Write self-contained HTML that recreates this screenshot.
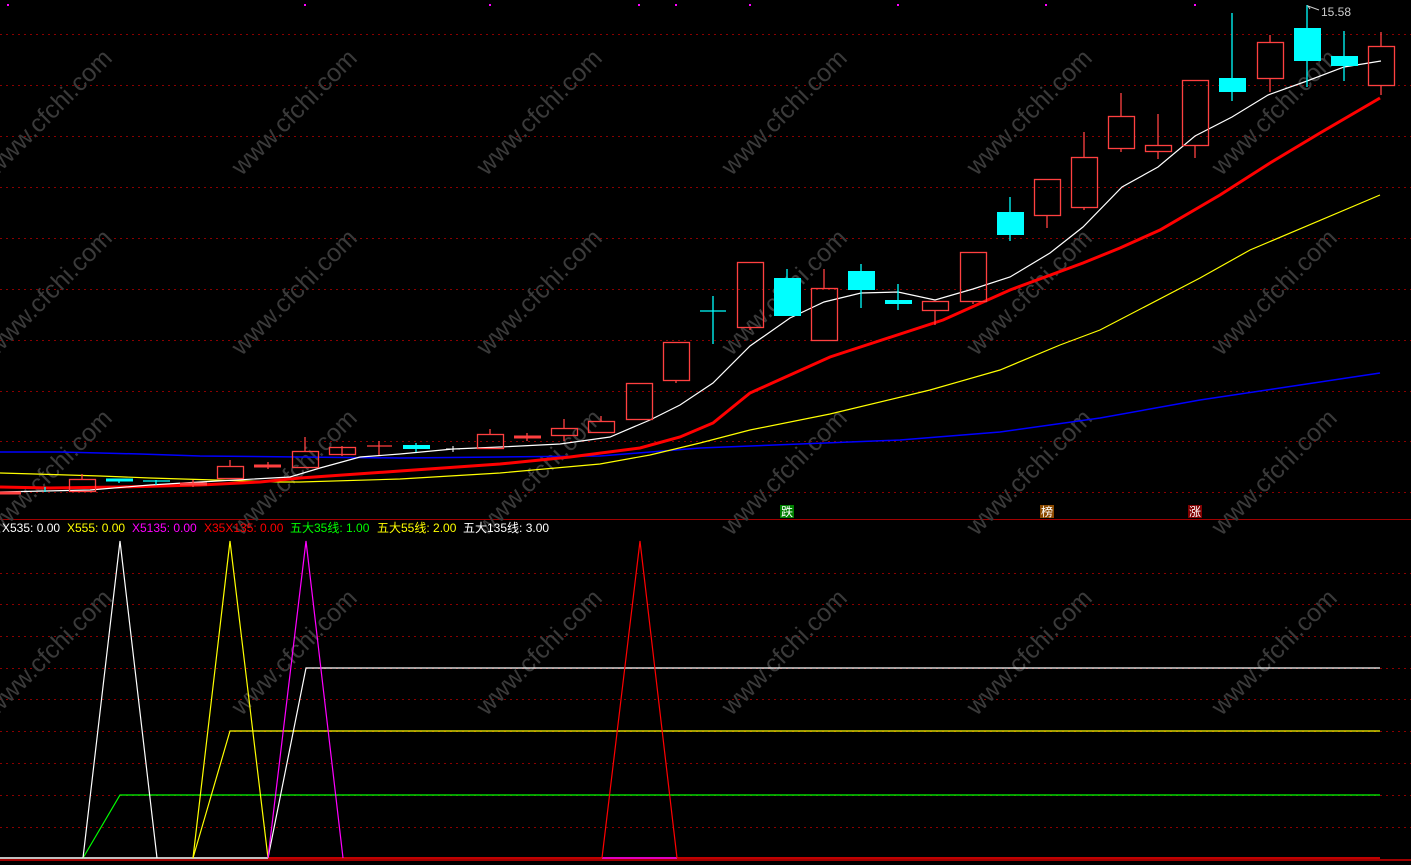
<!DOCTYPE html>
<html><head><meta charset="utf-8"><style>
html,body{margin:0;padding:0;background:#000;width:1411px;height:865px;overflow:hidden}
svg{display:block}
.wm{font-family:"Liberation Sans",sans-serif;font-size:25px;fill:#3a3a3a}
.lg{font-family:"Liberation Sans","Noto Sans CJK SC",sans-serif;font-size:12px}
</style></head><body>
<svg width="1411" height="865" xmlns="http://www.w3.org/2000/svg">
<g stroke="#8a0000" stroke-width="1" stroke-dasharray="2,4">
<line x1="0" y1="34.5" x2="1411" y2="34.5"/><line x1="0" y1="85.5" x2="1411" y2="85.5"/>
<line x1="0" y1="136.5" x2="1411" y2="136.5"/><line x1="0" y1="187.5" x2="1411" y2="187.5"/>
<line x1="0" y1="238.5" x2="1411" y2="238.5"/><line x1="0" y1="289.5" x2="1411" y2="289.5"/>
<line x1="0" y1="340.5" x2="1411" y2="340.5"/><line x1="0" y1="391.5" x2="1411" y2="391.5"/>
<line x1="0" y1="441.5" x2="1411" y2="441.5"/><line x1="0" y1="492.5" x2="1411" y2="492.5"/>
<line x1="0" y1="573.5" x2="1411" y2="573.5"/><line x1="0" y1="604.5" x2="1411" y2="604.5"/>
<line x1="0" y1="636.5" x2="1411" y2="636.5"/><line x1="0" y1="668.5" x2="1411" y2="668.5"/>
<line x1="0" y1="699.5" x2="1411" y2="699.5"/><line x1="0" y1="731.5" x2="1411" y2="731.5"/>
<line x1="0" y1="763.5" x2="1411" y2="763.5"/><line x1="0" y1="795.5" x2="1411" y2="795.5"/>
<line x1="0" y1="827.5" x2="1411" y2="827.5"/>
</g>
<line x1="0" y1="519.5" x2="1411" y2="519.5" stroke="#a00000"/>
<line x1="0" y1="860" x2="1411" y2="860" stroke="#a00000" stroke-width="2"/>
<g class="wm">
<g transform="translate(55,118) rotate(-45)"><text text-anchor="middle">www.cfchi.com</text></g>
<g transform="translate(300,118) rotate(-45)"><text text-anchor="middle">www.cfchi.com</text></g>
<g transform="translate(545,118) rotate(-45)"><text text-anchor="middle">www.cfchi.com</text></g>
<g transform="translate(790,118) rotate(-45)"><text text-anchor="middle">www.cfchi.com</text></g>
<g transform="translate(1035,118) rotate(-45)"><text text-anchor="middle">www.cfchi.com</text></g>
<g transform="translate(1280,118) rotate(-45)"><text text-anchor="middle">www.cfchi.com</text></g>
<g transform="translate(55,298) rotate(-45)"><text text-anchor="middle">www.cfchi.com</text></g>
<g transform="translate(300,298) rotate(-45)"><text text-anchor="middle">www.cfchi.com</text></g>
<g transform="translate(545,298) rotate(-45)"><text text-anchor="middle">www.cfchi.com</text></g>
<g transform="translate(790,298) rotate(-45)"><text text-anchor="middle">www.cfchi.com</text></g>
<g transform="translate(1035,298) rotate(-45)"><text text-anchor="middle">www.cfchi.com</text></g>
<g transform="translate(1280,298) rotate(-45)"><text text-anchor="middle">www.cfchi.com</text></g>
<g transform="translate(55,478) rotate(-45)"><text text-anchor="middle">www.cfchi.com</text></g>
<g transform="translate(300,478) rotate(-45)"><text text-anchor="middle">www.cfchi.com</text></g>
<g transform="translate(545,478) rotate(-45)"><text text-anchor="middle">www.cfchi.com</text></g>
<g transform="translate(790,478) rotate(-45)"><text text-anchor="middle">www.cfchi.com</text></g>
<g transform="translate(1035,478) rotate(-45)"><text text-anchor="middle">www.cfchi.com</text></g>
<g transform="translate(1280,478) rotate(-45)"><text text-anchor="middle">www.cfchi.com</text></g>
<g transform="translate(55,658) rotate(-45)"><text text-anchor="middle">www.cfchi.com</text></g>
<g transform="translate(300,658) rotate(-45)"><text text-anchor="middle">www.cfchi.com</text></g>
<g transform="translate(545,658) rotate(-45)"><text text-anchor="middle">www.cfchi.com</text></g>
<g transform="translate(790,658) rotate(-45)"><text text-anchor="middle">www.cfchi.com</text></g>
<g transform="translate(1035,658) rotate(-45)"><text text-anchor="middle">www.cfchi.com</text></g>
<g transform="translate(1280,658) rotate(-45)"><text text-anchor="middle">www.cfchi.com</text></g>
</g>
<g fill="#ff00ff">
<rect x="7" y="4" width="2" height="2"/><rect x="304" y="4" width="2" height="2"/><rect x="489" y="4" width="2" height="2"/><rect x="638" y="4" width="2" height="2"/><rect x="675" y="4" width="2" height="2"/><rect x="749" y="4" width="2" height="2"/><rect x="897" y="4" width="2" height="2"/><rect x="1045" y="4" width="2" height="2"/><rect x="1194" y="4" width="2" height="2"/>
</g>
<!-- MAs -->
<polyline fill="none" stroke="#0000ff" stroke-width="1.5" points="0,452 60,452 100,453 140,454 200,456 300,457 400,458 500,457 600,456 700,448 800,444 900,440 1000,432 1100,418 1200,400 1300,385 1380,373"/>
<polyline fill="none" stroke="#ffff00" stroke-width="1.2" points="0,473 35,474 100,476 150,478 280,482 300,482 400,479 500,473 600,464 650,455 700,443 750,430 830,414 930,390 1000,370 1060,345 1100,330 1200,278 1250,250 1380,195"/>
<polyline fill="none" stroke="#ff0000" stroke-width="3" points="0,487 50,488 120,487 200,485 260,482 300,478 400,471 500,464 570,457 640,448 680,437 713,423 750,393 830,357 943,320 1010,290 1083,263 1120,248 1160,230 1220,195 1270,163 1320,133 1380,98"/>
<polyline fill="none" stroke="#ffffff" stroke-width="1.2" points="0,492 90,490 150,485 200,482 290,477 320,468 360,457 400,454 453,449 500,447 560,444 610,437 650,420 680,405 713,383 750,346 790,318 824,302 861,293 898,292 935,300 973,289 1010,277 1050,253 1083,227 1122,187 1158,167 1195,136 1232,117 1268,95 1307,81 1344,67 1381,61"/>
<!-- red candles -->
<g stroke="#ff4040" stroke-width="1.3" fill="none">
<line x1="0" y1="493" x2="21" y2="493" stroke-width="3"/>
<line x1="82" y1="474" x2="82" y2="479"/><rect x="69.5" y="479.5" width="26" height="12"/>
<line x1="180" y1="484" x2="207" y2="484" stroke-width="3"/><line x1="193" y1="480" x2="193" y2="487"/>
<line x1="230" y1="460" x2="230" y2="466"/><rect x="217.5" y="466.5" width="26" height="12"/>
<line x1="254" y1="466" x2="281" y2="466" stroke-width="3"/><line x1="268" y1="462" x2="268" y2="469"/>
<line x1="305" y1="437" x2="305" y2="451"/><rect x="292.5" y="451.5" width="26" height="16"/>
<line x1="342" y1="446" x2="342" y2="456"/><rect x="329.5" y="447.5" width="26" height="7"/>
<line x1="367" y1="446" x2="392" y2="446"/><line x1="379" y1="441" x2="379" y2="455"/>
<line x1="490" y1="429" x2="490" y2="434"/><rect x="477.5" y="434.5" width="26" height="14"/>
<line x1="514" y1="437" x2="541" y2="437" stroke-width="3"/><line x1="527" y1="433" x2="527" y2="441"/>
<line x1="564" y1="419" x2="564" y2="428"/><line x1="564" y1="435" x2="564" y2="441"/><rect x="551.5" y="428.5" width="26" height="7"/>
<line x1="601" y1="416" x2="601" y2="421"/><rect x="588.5" y="421.5" width="26" height="11"/>
<rect x="626.5" y="383.5" width="26" height="36"/>
<line x1="676" y1="380" x2="676" y2="383"/><rect x="663.5" y="342.5" width="26" height="38"/>
<line x1="750" y1="327" x2="750" y2="330"/><rect x="737.5" y="262.5" width="26" height="65"/>
<line x1="824" y1="269" x2="824" y2="288"/><rect x="811.5" y="288.5" width="26" height="52"/>
<line x1="935" y1="310" x2="935" y2="325"/><rect x="922.5" y="301.5" width="26" height="9"/>
<line x1="973" y1="301" x2="973" y2="304"/><rect x="960.5" y="252.5" width="26" height="49"/>
<line x1="1047" y1="215" x2="1047" y2="228"/><rect x="1034.5" y="179.5" width="26" height="36"/>
<line x1="1084" y1="132" x2="1084" y2="157"/><line x1="1084" y1="207" x2="1084" y2="210"/><rect x="1071.5" y="157.5" width="26" height="50"/>
<line x1="1121" y1="93" x2="1121" y2="116"/><line x1="1121" y1="148" x2="1121" y2="152"/><rect x="1108.5" y="116.5" width="26" height="32"/>
<line x1="1158" y1="114" x2="1158" y2="145"/><line x1="1158" y1="151" x2="1158" y2="159"/><rect x="1145.5" y="145.5" width="26" height="6"/>
<line x1="1195" y1="145" x2="1195" y2="158"/><rect x="1182.5" y="80.5" width="26" height="65"/>
<line x1="1270" y1="35" x2="1270" y2="42"/><line x1="1270" y1="78" x2="1270" y2="92"/><rect x="1257.5" y="42.5" width="26" height="36"/>
<line x1="1381" y1="32" x2="1381" y2="46"/><line x1="1381" y1="85" x2="1381" y2="95"/><rect x="1368.5" y="46.5" width="26" height="39"/>
</g>
<!-- cyan candles -->
<g stroke="#00ffff" stroke-width="1.3" fill="#00ffff">
<line x1="45" y1="487" x2="45" y2="492"/>
<line x1="106" y1="480" x2="133" y2="480" stroke-width="3"/><line x1="119" y1="480" x2="119" y2="483"/>
<line x1="143" y1="481" x2="170" y2="481"/><line x1="156" y1="480" x2="156" y2="485"/>
<rect x="403" y="445" width="27" height="4" stroke="none"/><line x1="416" y1="443" x2="416" y2="452"/>
<line x1="700" y1="311" x2="726" y2="311"/><line x1="713" y1="296" x2="713" y2="344"/>
<rect x="774" y="278" width="27" height="38" stroke="none"/><line x1="787" y1="269" x2="787" y2="278"/>
<rect x="848" y="271" width="27" height="19" stroke="none"/><line x1="861" y1="264" x2="861" y2="308"/>
<rect x="885" y="300" width="27" height="4" stroke="none"/><line x1="898" y1="284" x2="898" y2="310"/>
<rect x="997" y="212" width="27" height="23" stroke="none"/><line x1="1010" y1="197" x2="1010" y2="241"/>
<rect x="1219" y="78" width="27" height="14" stroke="none"/><line x1="1232" y1="13" x2="1232" y2="101"/>
<rect x="1294" y="28" width="27" height="33" stroke="none"/><line x1="1307" y1="5" x2="1307" y2="87"/>
<rect x="1331" y="56" width="27" height="10" stroke="none"/><line x1="1344" y1="31" x2="1344" y2="81"/>
</g>
<line x1="446" y1="449" x2="460" y2="449" stroke="#fff"/><line x1="453" y1="446" x2="453" y2="452" stroke="#fff"/>
<polyline points="1310,9 1308,6 1319,10" fill="none" stroke="#ccc"/>
<text x="1321" y="16" fill="#cccccc" font-family="Liberation Sans,sans-serif" font-size="12">15.58</text>
<!-- labels -->
<rect x="780" y="505" width="14" height="13" fill="#008000"/><text x="781" y="516" fill="#fff" class="lg">跌</text>
<rect x="1040" y="505" width="14" height="13" fill="#8b4a00"/><text x="1041" y="516" fill="#fff" class="lg">榜</text>
<rect x="1188" y="505" width="14" height="13" fill="#800000"/><text x="1189" y="516" fill="#fff" class="lg">涨</text>
<text y="532" class="lg"><tspan x="2" fill="#ffffff">X535: 0.00</tspan><tspan x="67" fill="#ffff00">X555: 0.00</tspan><tspan x="132" fill="#ff00ff">X5135: 0.00</tspan><tspan x="204" fill="#ff0000">X35X135: 0.00</tspan><tspan x="290" fill="#00ff00">五大35线: 1.00</tspan><tspan x="377" fill="#ffff00">五大55线: 2.00</tspan><tspan x="463" fill="#ffffff">五大135线: 3.00</tspan></text>
<!-- lower panel -->
<line x1="0" y1="858" x2="268" y2="858" stroke="#fff" stroke-width="1.5"/>
<line x1="268" y1="858" x2="1380" y2="858" stroke="#ff0000" stroke-width="1.5"/>
<line x1="602" y1="858" x2="677" y2="858" stroke="#ff00ff" stroke-width="1.5"/>
<polyline fill="none" stroke="#00ff00" stroke-width="1.2" points="83,858 120,795 1380,795"/>
<polyline fill="none" stroke="#ffff00" stroke-width="1.2" points="193,858 230,731 1380,731"/>
<polyline fill="none" stroke="#ffffff" stroke-width="1.2" points="268,858 306,668 1380,668"/>
<polyline fill="none" stroke="#ffffff" stroke-width="1.2" points="83,858 120,541 157,858"/>
<polyline fill="none" stroke="#ffff00" stroke-width="1.2" points="193,858 230,541 268,858"/>
<polyline fill="none" stroke="#ff00ff" stroke-width="1.2" points="268,858 306,541 343,858"/>
<polyline fill="none" stroke="#ff0000" stroke-width="1.2" points="602,858 640,541 677,858"/>
</svg>
</body></html>
